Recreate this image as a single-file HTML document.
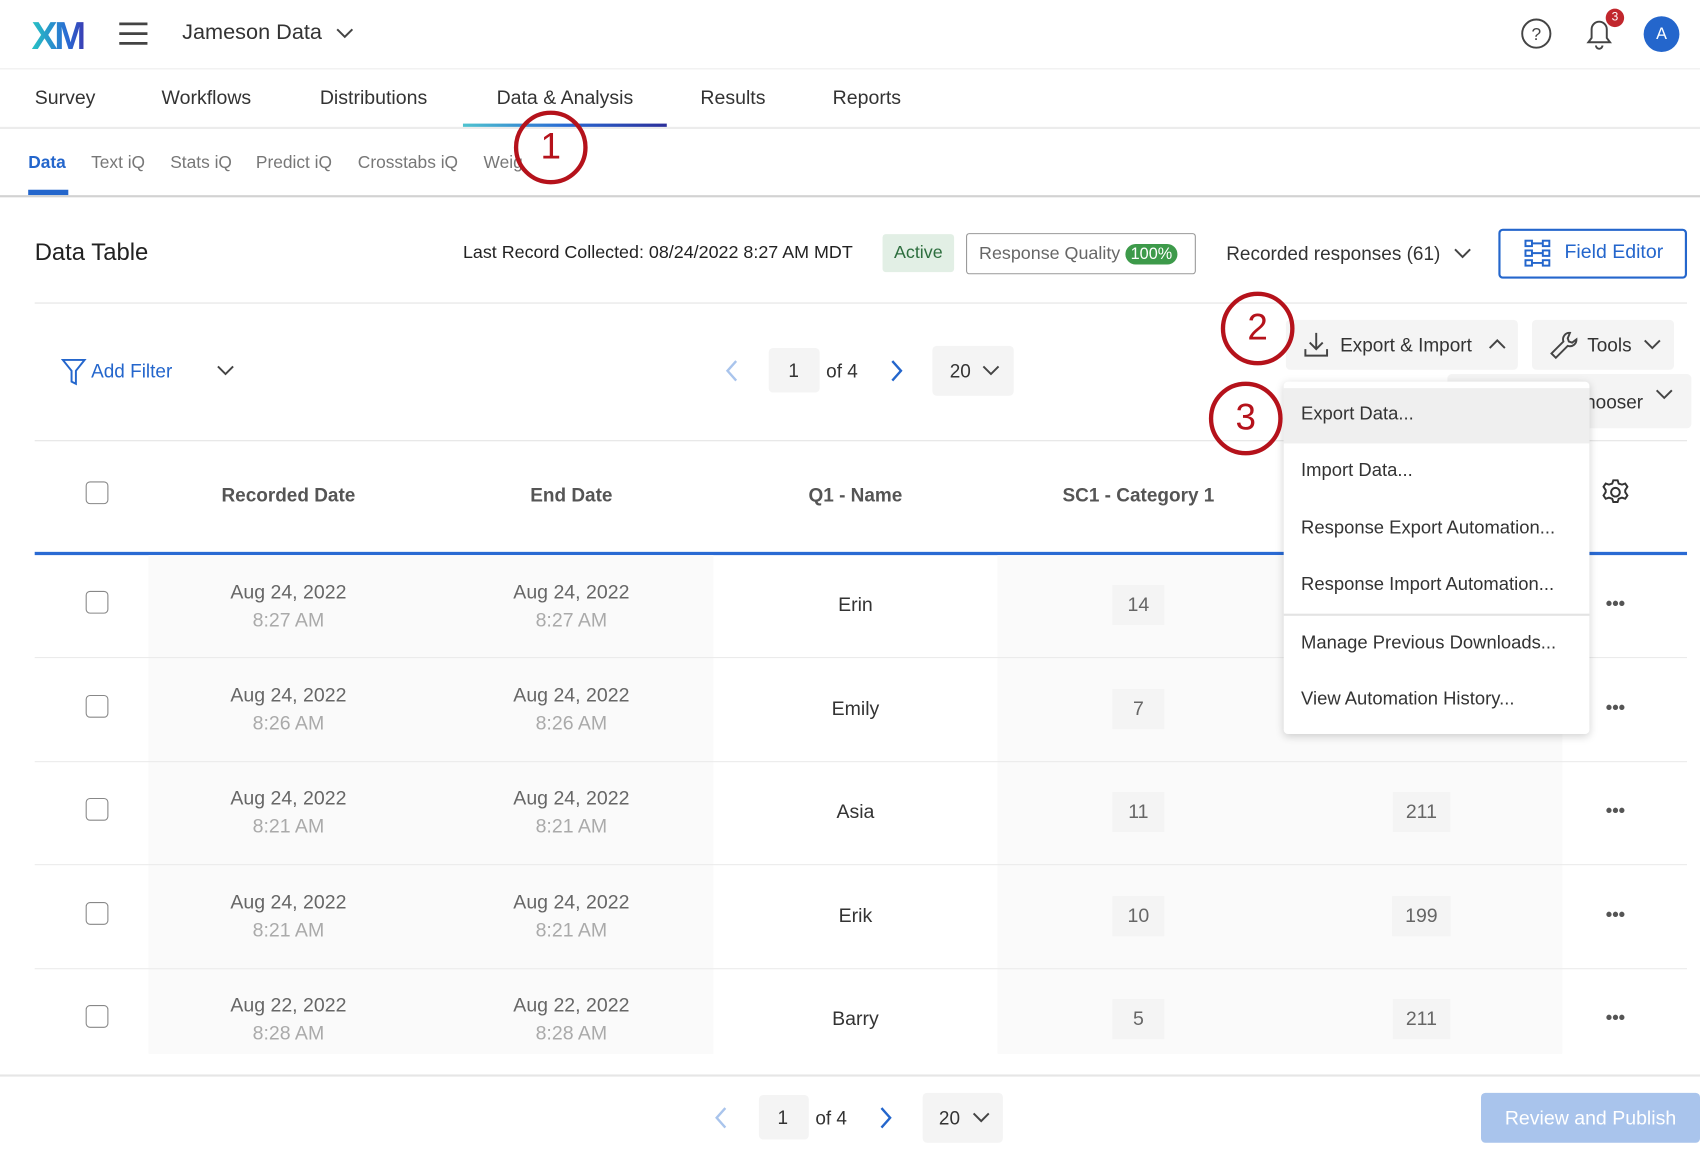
<!DOCTYPE html>
<html><head><meta charset="utf-8"><style>
*{box-sizing:border-box;margin:0;padding:0}
html,body{width:1700px;height:1162px;overflow:hidden;background:#fff}
#s{position:absolute;left:0;top:0;width:1568px;height:1072px;transform:scale(1.0842);transform-origin:0 0;font-family:"Liberation Sans",sans-serif;color:#333}
.a{position:absolute;white-space:nowrap}
.hl{position:absolute;height:1px;background:#e3e3e3}
.c{transform:translate(-50%,-50%)}
.cb{position:absolute;width:21px;height:21px;border:1.5px solid #888;border-radius:4px;background:#fff}
.dt{position:absolute;text-align:center;font-size:18px;color:#666;line-height:26px;transform:translateX(-50%)}
.dt span{color:#aaa;display:block}
.num{position:absolute;transform:translate(-50%,-50%);background:#f4f4f4;padding:8px 12px;font-size:18px;color:#666;min-width:48px;text-align:center}
.dots{position:absolute;transform:translate(-50%,-50%);font-size:17px;color:#555;letter-spacing:0px;font-weight:bold}
.ring{position:absolute;width:68px;height:68px;border:4px solid #b5121b;border-radius:50%;background:transparent;color:#b5121b;font-size:34px;text-align:center;line-height:58px;font-family:"Liberation Sans",sans-serif}
.mi{position:absolute;left:1200px;font-size:17px;color:#333;transform:translateY(-50%)}
.box{position:absolute;background:#f4f4f4;border-radius:4px}
</style></head><body><div id="s">
<div class="a" style="left:29px;top:12px;font-size:36px;font-weight:bold;letter-spacing:-3px;background:linear-gradient(90deg,#27c4c4,#2a6ad3 70%,#3a3fb5);-webkit-background-clip:text;color:transparent">XM</div>
<svg class="a" style="left:109px;top:20px" width="28" height="22"><path d="M1 2h26M1 11h26M1 20h26" stroke="#444" stroke-width="2.5"/></svg>
<div class="a" style="left:168px;top:19px;font-size:20px;color:#333">Jameson Data</div>
<svg class="a" style="left:310px;top:26px" width="16" height="10"><path d="M1 1l7 7 7-7" stroke="#444" stroke-width="1.8" fill="none"/></svg>
<svg class="a" style="left:1402px;top:16px" width="30" height="30"><circle cx="15" cy="15" r="13" stroke="#444" stroke-width="1.8" fill="none"/><text x="15" y="21" font-size="16" text-anchor="middle" fill="#444" font-family="Liberation Sans">?</text></svg>
<svg class="a" style="left:1460px;top:14px" width="30" height="34"><path d="M5 25h20l-3-4v-8a7 7 0 0 0-14 0v8z" stroke="#444" stroke-width="1.8" fill="none"/><path d="M12 28a3 3 0 0 0 6 0" stroke="#444" stroke-width="1.8" fill="none"/></svg>
<div class="a" style="left:1481px;top:8px;width:17px;height:17px;border-radius:50%;background:#c1272d;color:#fff;font-size:11px;text-align:center;line-height:17px">3</div>
<div class="a" style="left:1516px;top:15px;width:33px;height:33px;border-radius:50%;background:#2466cc;color:#fff;font-size:15px;text-align:center;line-height:33px">A</div>
<div class="hl" style="left:0;top:63px;width:1568px;background:#ececec"></div>
<div class="a" style="left:32px;top:80px;font-size:18px">Survey</div>
<div class="a" style="left:149px;top:80px;font-size:18px">Workflows</div>
<div class="a" style="left:295px;top:80px;font-size:18px">Distributions</div>
<div class="a" style="left:458px;top:80px;font-size:18px">Data &amp; Analysis</div>
<div class="a" style="left:646px;top:80px;font-size:18px">Results</div>
<div class="a" style="left:768px;top:80px;font-size:18px">Reports</div>
<div class="hl" style="left:0;top:117px;width:1568px;height:2px;background:#ececec"></div>
<div class="a" style="left:427px;top:114px;width:188px;height:3px;background:linear-gradient(90deg,#4fc3cf,#2a6ad3 50%,#2b2f9a)"></div>
<div class="a" style="left:26px;top:142px;font-size:16px;color:#2466cc;font-weight:bold">Data</div>
<div class="a" style="left:26px;top:175px;width:37px;height:5px;background:#2466cc"></div>
<div class="a" style="left:84px;top:142px;font-size:16px;color:#777">Text iQ</div>
<div class="a" style="left:157px;top:142px;font-size:16px;color:#777">Stats iQ</div>
<div class="a" style="left:236px;top:142px;font-size:16px;color:#777">Predict iQ</div>
<div class="a" style="left:330px;top:142px;font-size:16px;color:#777">Crosstabs iQ</div>
<div class="a" style="left:446px;top:142px;font-size:16px;color:#777">Weig</div>
<div class="hl" style="left:0;top:180px;width:1568px;height:2px;background:#d2d2d2"></div>
<div class="a" style="left:32px;top:220px;font-size:22px;color:#222">Data Table</div>
<div class="a" style="left:427px;top:224px;font-size:16.5px;color:#222">Last Record Collected: 08/24/2022 8:27 AM MDT</div>
<div class="a" style="left:814px;top:216px;width:66px;height:35px;background:#e2efe5;border-radius:3px;color:#2d6e3e;font-size:16.5px;text-align:center;line-height:35px">Active</div>
<div class="a" style="left:891px;top:215px;width:212px;height:38px;border:1px solid #999;border-radius:3px;font-size:16.5px;color:#666;line-height:36px;padding-left:11px">Response Quality <span style="background:#3d9a4a;color:#fff;border-radius:10px;padding:1px 5px;font-size:15px">100%</span></div>
<div class="a" style="left:1131px;top:224px;font-size:17.5px;color:#333">Recorded responses (61)</div>
<svg class="a" style="left:1341px;top:229px" width="16" height="10"><path d="M1 1l7 7 7-7" stroke="#444" stroke-width="1.8" fill="none"/></svg>
<div class="a" style="left:1382px;top:211px;width:174px;height:46px;border:2px solid #2466cc;border-radius:4px"></div>
<svg class="a" style="left:1405px;top:220px" width="28" height="28" fill="none" stroke="#2466cc" stroke-width="1.8"><rect x="2" y="2" width="6" height="5"/><rect x="18" y="2" width="6" height="5"/><rect x="2" y="11" width="6" height="5"/><rect x="18" y="11" width="6" height="5"/><rect x="2" y="20" width="6" height="5"/><rect x="18" y="20" width="6" height="5"/><path d="M8 4.5h10M8 13.5h10M8 22.5h10"/></svg>
<div class="a" style="left:1443px;top:222px;font-size:18px;color:#2466cc">Field Editor</div>
<div class="hl" style="left:32px;top:279px;width:1524px"></div>
<svg class="a" style="left:56px;top:330px" width="24" height="26"><path d="M2 2h20l-8 10v12l-4-2V12z" stroke="#2466cc" stroke-width="1.8" fill="none"/></svg>
<div class="a" style="left:84px;top:332px;font-size:17.5px;color:#2466cc">Add Filter</div>
<svg class="a" style="left:200px;top:337px" width="16" height="10"><path d="M1 1l7 7 7-7" stroke="#444" stroke-width="1.8" fill="none"/></svg>
<svg class="a" style="left:668px;top:331px" width="14" height="22"><path d="M11 2L3 11l8 9" stroke="#a9c4ec" stroke-width="2.2" fill="none"/></svg>
<div class="box" style="left:709px;top:321px;width:47px;height:41px"></div>
<div class="a c" style="left:732px;top:342px;font-size:17.5px">1</div>
<div class="a" style="left:762px;top:332px;font-size:17.5px">of 4</div>
<svg class="a" style="left:820px;top:331px" width="14" height="22"><path d="M3 2l8 9-8 9" stroke="#2466cc" stroke-width="2.2" fill="none"/></svg>
<div class="box" style="left:860px;top:319px;width:75px;height:46px"></div>
<div class="a" style="left:876px;top:332px;font-size:17.5px">20</div>
<svg class="a" style="left:906px;top:337px" width="16" height="10"><path d="M1 1l7 7 7-7" stroke="#444" stroke-width="1.8" fill="none"/></svg>
<div class="box" style="left:1186px;top:295px;width:214px;height:46px"></div>
<svg class="a" style="left:1201px;top:305px" width="26" height="26" fill="none" stroke="#444" stroke-width="1.8"><path d="M13 2v15M7 11l6 6 6-6M3 17v6h20v-6"/></svg>
<div class="a" style="left:1236px;top:308px;font-size:17.5px">Export &amp; Import</div>
<svg class="a" style="left:1373px;top:312px" width="16" height="10"><path d="M1 9l7-7 7 7" stroke="#444" stroke-width="1.8" fill="none"/></svg>
<div class="box" style="left:1413px;top:295px;width:131px;height:46px"></div>
<svg class="a" style="left:1428px;top:304px" width="30" height="30" fill="none" stroke="#444" stroke-width="1.8"><path d="M20 3a6 6 0 0 0-6 8L3 22l4 4 11-11a6 6 0 0 0 8-6l-4 3-3-1-1-3z"/></svg>
<div class="a" style="left:1464px;top:308px;font-size:17.5px">Tools</div>
<svg class="a" style="left:1516px;top:313px" width="16" height="10"><path d="M1 1l7 7 7-7" stroke="#444" stroke-width="1.8" fill="none"/></svg>
<div class="box" style="left:1335px;top:345px;width:225px;height:50px"></div>
<div class="a" style="left:1462px;top:361px;font-size:17.5px">hooser</div>
<svg class="a" style="left:1527px;top:359px" width="16" height="10"><path d="M1 1l7 7 7-7" stroke="#444" stroke-width="1.8" fill="none"/></svg>
<div class="hl" style="left:32px;top:406px;width:1524px"></div>
<div class="cb" style="left:79px;top:444px"></div>
<div class="a c" style="left:266px;top:457px;font-size:17.5px;font-weight:bold;color:#555">Recorded Date</div>
<div class="a c" style="left:527px;top:457px;font-size:17.5px;font-weight:bold;color:#555">End Date</div>
<div class="a c" style="left:789px;top:457px;font-size:17.5px;font-weight:bold;color:#555">Q1 - Name</div>
<div class="a c" style="left:1050px;top:457px;font-size:17.5px;font-weight:bold;color:#555">SC1 - Category 1</div>
<svg class="a" style="left:1477px;top:441px" width="26" height="26" fill="none" stroke="#333" stroke-width="1.8"><circle cx="13" cy="13" r="4"/><path d="M11 2h4l1 3 3 1 3-1 2 3-2 3v2l2 3-2 3-3-1-3 1-1 3h-4l-1-3-3-1-3 1-2-3 2-3v-2l-2-3 2-3 3 1 3-1z"/></svg>
<div class="a" style="left:32px;top:509px;width:1524px;height:3px;background:#2a6ad3"></div>
<div class="a" style="left:137px;top:512px;width:521px;height:460px;background:#fafafa"></div>
<div class="a" style="left:920px;top:512px;width:521px;height:460px;background:#fafafa"></div>
<div class="hl" style="left:32px;top:606px;width:1524px;background:#ebebeb"></div>
<div class="hl" style="left:32px;top:702px;width:1524px;background:#ebebeb"></div>
<div class="hl" style="left:32px;top:797px;width:1524px;background:#ebebeb"></div>
<div class="hl" style="left:32px;top:893px;width:1524px;background:#ebebeb"></div>
<div class="cb" style="left:79px;top:545px"></div><div class="dt" style="left:266px;top:533px">Aug 24, 2022<span>8:27 AM</span></div><div class="dt" style="left:527px;top:533px">Aug 24, 2022<span>8:27 AM</span></div><div class="a c" style="left:789px;top:558px;font-size:18px">Erin</div><div class="num" style="left:1050px;top:558px">14</div><div class="dots" style="left:1490px;top:557px">•••</div>
<div class="cb" style="left:79px;top:641px"></div><div class="dt" style="left:266px;top:628px">Aug 24, 2022<span>8:26 AM</span></div><div class="dt" style="left:527px;top:628px">Aug 24, 2022<span>8:26 AM</span></div><div class="a c" style="left:789px;top:654px;font-size:18px">Emily</div><div class="num" style="left:1050px;top:654px">7</div><div class="dots" style="left:1490px;top:653px">•••</div>
<div class="cb" style="left:79px;top:736px"></div><div class="dt" style="left:266px;top:723px">Aug 24, 2022<span>8:21 AM</span></div><div class="dt" style="left:527px;top:723px">Aug 24, 2022<span>8:21 AM</span></div><div class="a c" style="left:789px;top:749px;font-size:18px">Asia</div><div class="num" style="left:1050px;top:749px">11</div><div class="num" style="left:1311px;top:749px">211</div><div class="dots" style="left:1490px;top:748px">•••</div>
<div class="cb" style="left:79px;top:832px"></div><div class="dt" style="left:266px;top:819px">Aug 24, 2022<span>8:21 AM</span></div><div class="dt" style="left:527px;top:819px">Aug 24, 2022<span>8:21 AM</span></div><div class="a c" style="left:789px;top:845px;font-size:18px">Erik</div><div class="num" style="left:1050px;top:845px">10</div><div class="num" style="left:1311px;top:845px">199</div><div class="dots" style="left:1490px;top:844px">•••</div>
<div class="cb" style="left:79px;top:927px"></div><div class="dt" style="left:266px;top:914px">Aug 22, 2022<span>8:28 AM</span></div><div class="dt" style="left:527px;top:914px">Aug 22, 2022<span>8:28 AM</span></div><div class="a c" style="left:789px;top:940px;font-size:18px">Barry</div><div class="num" style="left:1050px;top:940px">5</div><div class="num" style="left:1311px;top:940px">211</div><div class="dots" style="left:1490px;top:939px">•••</div>
<div class="hl" style="left:0;top:991px;width:1568px;height:2px;background:#e6e6e6"></div>
<svg class="a" style="left:658px;top:1020px" width="14" height="22"><path d="M11 2L3 11l8 9" stroke="#a9c4ec" stroke-width="2.2" fill="none"/></svg>
<div class="box" style="left:700px;top:1010px;width:46px;height:41px"></div>
<div class="a c" style="left:722px;top:1031px;font-size:17.5px">1</div>
<div class="a" style="left:752px;top:1021px;font-size:17.5px">of 4</div>
<svg class="a" style="left:810px;top:1020px" width="14" height="22"><path d="M3 2l8 9-8 9" stroke="#2466cc" stroke-width="2.2" fill="none"/></svg>
<div class="box" style="left:851px;top:1008px;width:74px;height:46px"></div>
<div class="a" style="left:866px;top:1021px;font-size:17.5px">20</div>
<svg class="a" style="left:897px;top:1026px" width="16" height="10"><path d="M1 1l7 7 7-7" stroke="#444" stroke-width="1.8" fill="none"/></svg>
<div class="a" style="left:1366px;top:1008px;width:202px;height:46px;background:#a9c4ec;border-radius:4px;color:#fff;font-size:18px;text-align:center;line-height:46px">Review and Publish</div>
<div class="a" style="left:1184px;top:352px;width:282px;height:325px;background:#fff;border-radius:4px;box-shadow:0 2px 8px rgba(0,0,0,.18)"></div>
<div class="a" style="left:1184px;top:358px;width:282px;height:51px;background:#efefef"></div>
<div class="mi" style="top:382px">Export Data...</div>
<div class="mi" style="top:434px">Import Data...</div>
<div class="mi" style="top:487px">Response Export Automation...</div>
<div class="mi" style="top:539px">Response Import Automation...</div>
<div class="hl" style="left:1184px;top:566px;width:282px;height:2px;background:#e3e3e3"></div>
<div class="mi" style="top:593px">Manage Previous Downloads...</div>
<div class="mi" style="top:645px">View Automation History...</div>
<div class="ring" style="left:474px;top:102px">1</div>
<div class="ring" style="left:1126px;top:269px">2</div>
<div class="ring" style="left:1115px;top:352px">3</div>
</div></body></html>
